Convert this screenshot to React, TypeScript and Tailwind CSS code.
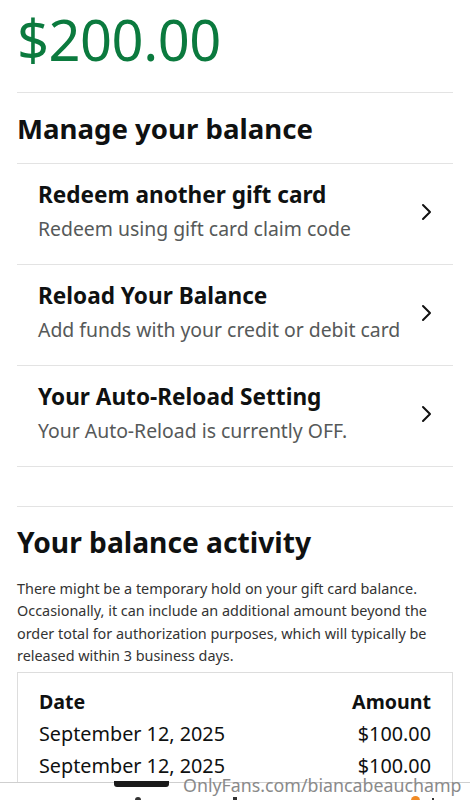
import React from 'react'

const font = { fontFamily: '"Noto Sans", "Open Sans", Arial, sans-serif' }

const rows = [
  { title: 'Redeem another gift card', sub: 'Redeem using gift card claim code' },
  { title: 'Reload Your Balance', sub: 'Add funds with your credit or debit card' },
  { title: 'Your Auto-Reload Setting', sub: 'Your Auto-Reload is currently OFF.' },
]

const activity = [
  { date: 'September 12, 2025', amount: '$100.00' },
  { date: 'September 12, 2025', amount: '$100.00' },
]

function Chevron() {
  return (
    <svg width="14" height="18" viewBox="0 0 14 18" fill="none" className="shrink-0 -mt-[4px]">
      <path d="M3 2l7 7-7 7" stroke="#111" strokeWidth="2" strokeLinecap="round" strokeLinejoin="round" />
    </svg>
  )
}

export default function App() {
  return (
    <div className="relative w-[470px] h-[800px] overflow-hidden bg-white text-[#0f1111]" style={font}>
      <div className="px-[17px]">
        <div className="pt-[2px] pb-[16px] text-[56px] leading-[74px] text-[#0b7a3e] tracking-[-0.5px]">$200.00</div>
        <div className="border-t border-[#e3e3e3]" />

        <h2 className="py-[16px] text-[27.6px] leading-[38px] font-bold">Manage your balance</h2>
        <div className="border-t border-[#e3e3e3]" />

        {rows.map((r) => (
          <div key={r.title} className="border-b border-[#e3e3e3]">
            <div className="flex items-center justify-between pl-[21px] pr-[19px] h-[100px]">
              <div className="self-start pt-[16px]">
                <div className="text-[22.6px] leading-[30px] font-bold">{r.title}</div>
                <div className="text-[19.4px] leading-[30px] text-[#565959] mt-[4px]">{r.sub}</div>
              </div>
              <Chevron />
            </div>
          </div>
        ))}

        <div className="h-[39px]" />
        <div className="border-t border-[#e3e3e3]" />

        <h2 className="pt-[15px] pb-[16px] text-[28.2px] leading-[40px] font-bold">Your balance activity</h2>
        <p className="text-[14.4px] leading-[22.3px] text-[#333]">
          There might be a temporary hold on your gift card balance. Occasionally, it can include an additional amount beyond the
          order total for authorization purposes, which will typically be released within 3 business days.
        </p>

        <div className="mt-[5px] h-[140px] border border-[#dddddd] px-[21px] pt-[13px]">
          <div className="flex justify-between text-[19.6px] leading-[32px] font-bold">
            <span>Date</span>
            <span>Amount</span>
          </div>
          {activity.map((a, i) => (
            <div key={i} className="flex justify-between text-[19.8px] leading-[32px]">
              <span>{a.date}</span>
              <span>{a.amount}</span>
            </div>
          ))}
        </div>
      </div>

      {/* bottom nav bar, mostly cut off */}
      <div className="absolute left-0 right-0 bottom-0 h-[18px] bg-white border-t border-[#cfcfcf]">
        <div className="absolute left-[114px] top-[-2px] w-[55px] h-[6px] rounded-b-[3px] bg-[#1a1a1a]" />
        <div className="absolute left-[183px] top-[-5px] text-[17.8px] leading-[15px] text-[#8a8a8a]">
          OnlyFans.com/biancabeauchamp
        </div>
        <div className="absolute left-[135px] top-[14px] w-[6px] h-[4px] rounded-t-full bg-[#333]" />
        <div className="absolute left-[233px] top-[14px] w-[4px] h-[4px] bg-[#333]" />
        <div className="absolute left-[411px] top-[13px] w-[9px] h-[6px] rounded-t-full bg-[#f08a24]" />
        <div className="absolute left-[432px] top-[15px] w-[2px] h-[3px] bg-[#333]" />
      </div>
    </div>
  )
}
